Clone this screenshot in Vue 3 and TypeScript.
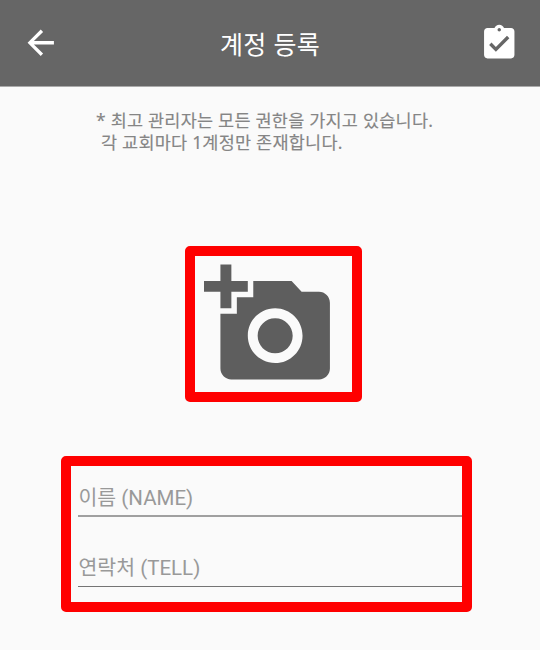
<script setup lang="ts">
import { ref } from 'vue'

interface Field {
  id: string
  label: string
}

const fields: Field[] = [
  { id: 'name', label: '이름 (NAME)' },
  { id: 'tell', label: '연락처 (TELL)' },
]
const values = ref<Record<string, string>>({ name: '', tell: '' })
</script>

<template>
  <div class="screen">
    <header class="bar">
      <button class="icon-button" type="button">
        <svg class="back" viewBox="0 0 24 24"><path d="M20 11H7.83l5.59-5.59L12 4l-8 8 8 8 1.41-1.41L7.83 13H20v-2z" /></svg>
      </button>
      <h1 class="title">계정 등록</h1>
      <button class="icon-button" type="button">
        <svg class="confirm" viewBox="0 0 24 24"><path d="M19 3h-4.18C14.4 1.84 13.3 1 12 1c-1.3 0-2.4.84-2.82 2H5c-1.1 0-2 .9-2 2v14c0 1.1.9 2 2 2h14c1.1 0 2-.9 2-2V5c0-1.1-.9-2-2-2zm-7 0c.55 0 1 .45 1 1s-.45 1-1 1-1-.45-1-1 .45-1 1-1zm-2 14l-4-4 1.41-1.41L10 14.17l6.59-6.59L18 9l-8 8z" /></svg>
      </button>
    </header>
    <main class="content">
      <p class="note"><span>* 최고 관리자는 모든 권한을 가지고 있습니다.</span><span class="second">각 교회마다 1계정만 존재합니다.</span></p>
      <button class="photo" type="button">
        <svg class="camera" viewBox="0 0 24 24"><path d="M3 4V1h2v3h3v2H5v3H3V6H0V4h3zm3 6V7h3V4h7l1.83 2H21c1.1 0 2 .9 2 2v12c0 1.1-.9 2-2 2H5c-1.1 0-2-.9-2-2V10h3zm7 9c2.76 0 5-2.24 5-5s-2.24-5-5-5-5 2.24-5 5 2.24 5 5 5zm-3.2-5c0 1.77 1.43 3.2 3.2 3.2s3.2-1.43 3.2-3.2-1.43-3.2-3.2-3.2-3.2 1.43-3.2 3.2z" /></svg>
      </button>
      <form class="form">
        <input v-for="f in fields" :key="f.id" v-model="values[f.id]" class="field" :class="f.id" type="text" :placeholder="f.label" />
      </form>
    </main>
  </div>
</template>

<style>
body {
  margin: 0;
  background: #fafafa;
}
</style>

<style scoped>
.screen {
  box-sizing: border-box;
  height: 650px;
  overflow: hidden;
  background: #fafafa;
  font-family: Roboto, "Noto Sans CJK KR", sans-serif;
}
.bar {
  box-sizing: border-box;
  display: flex;
  align-items: center;
  justify-content: space-between;
  height: 87px;
  padding: 0 20px 0 21px;
  background: #666;
  border-bottom: 1px solid #aaa;
}
.icon-button {
  display: flex;
  padding: 0;
  border: 0;
  background: none;
}
.back {
  width: 39.5px;
  height: 39.5px;
  fill: #fff;
}
.confirm {
  width: 40.5px;
  height: 40.5px;
  fill: #fff;
}
.title {
  margin: 0;
  padding-top: 1px;
  color: #fff;
  font: 400 25px/36px "Noto Sans", "Noto Sans CJK KR", sans-serif;
  letter-spacing: 0.3px;
}
.content {
  display: flex;
  flex-direction: column;
}
.note {
  display: flex;
  flex-direction: column;
  gap: 4px;
  margin: 24px 0 0 96px;
  color: #858585;
  font: 400 17.5px/18px "Noto Sans", "Noto Sans CJK KR", sans-serif;
  letter-spacing: 0.22px;
  white-space: nowrap;
  -webkit-text-stroke: 0.15px #858585;
}
.second {
  padding-left: 5px;
}
.photo {
  box-sizing: border-box;
  display: flex;
  width: 177px;
  height: 156px;
  margin: 95px 0 0 185.3px;
  padding: 3px 0 0 8.7px;
  border: 10px solid #f00;
  border-radius: 5px;
  background: none;
}
.camera {
  flex: none;
  width: 131.4px;
  height: 131.4px;
  fill: #5e5e5e;
}
.form {
  box-sizing: border-box;
  display: flex;
  flex-direction: column;
  width: 411.2px;
  height: 156px;
  margin: 54px 0 0 60.5px;
  padding: 10px 0 0 7.5px;
  border: 10px solid #f00;
  border-radius: 5px;
}
.field {
  box-sizing: border-box;
  width: 100%;
  height: 41px;
  padding: 4px 0 0 0.5px;
  border: 0;
  border-bottom: 2px solid #a0a0a0;
  border-radius: 0;
  outline: 0;
  background: none;
  color: #444;
  font: 400 20.5px/30px Roboto, "Noto Sans CJK KR", sans-serif;
}
.tell {
  margin-top: 29px;
  border-bottom: 1px solid #747474;
}
.field::placeholder {
  color: #999;
  opacity: 1;
}
</style>
